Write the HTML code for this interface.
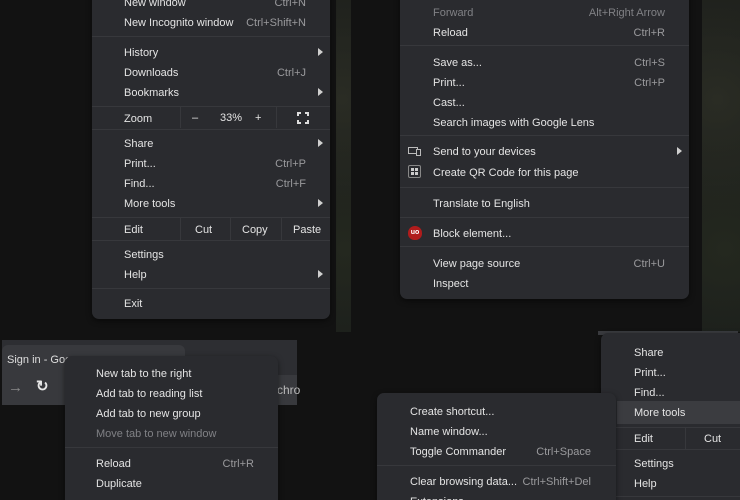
<!DOCTYPE html>
<html><head><meta charset="utf-8"><style>
*{margin:0;padding:0;box-sizing:border-box}
html{width:740px;height:500px;overflow:hidden;background:#121212}
body{width:740px;height:500px;background:#121212;position:relative;overflow:hidden;font-family:"Liberation Sans",sans-serif;font-size:11px;color:#e4e4e4}
.m{position:absolute;background:#2a2b2f;border-radius:7px;box-shadow:0 2px 6px rgba(0,0,0,.5)}
.t{position:absolute;white-space:nowrap;line-height:14px}
.r{position:absolute;white-space:nowrap;line-height:14px;color:#9a9a9d;text-align:right}
.d{color:#808185}
.s{position:absolute;height:1px;background:#37383c}
.v{position:absolute;width:1px;background:#37383c}
.a{position:absolute;width:0;height:0;border-top:4px solid transparent;border-bottom:4px solid transparent;border-left:5px solid #cfcfcf}
.star{position:absolute;background:radial-gradient(circle at 40% 30%,#2a2c24 0,transparent 50%),radial-gradient(circle at 60% 75%,#24281f 0,transparent 50%),linear-gradient(#1e201c,#1a1d1b);}
.c{position:absolute;width:4px;height:4px;border-color:#ddd;border-style:solid;border-width:0}
</style></head><body>

<div class="star" style="left:336px;top:0;width:15px;height:332px"></div>
<div class="star" style="left:702px;top:0;width:38px;height:332px"></div>
<div style="position:absolute;left:598px;top:331px;width:140px;height:4px;background:#3a3b3f"></div>

<!-- Menu 1 -->
<div class="m" style="left:92px;top:-20px;width:238px;height:339px"></div>
<div class="t" style="left:124px;top:-4px">New window</div><div class="r" style="left:230px;width:76px;top:-4px">Ctrl+N</div>
<div class="t" style="left:124px;top:16px">New Incognito window</div><div class="r" style="left:230px;width:76px;top:16px">Ctrl+Shift+N</div>
<div class="s" style="left:92px;width:238px;top:36px"></div>
<div class="t" style="left:124px;top:46px">History</div><div class="a" style="left:318px;top:48px"></div>
<div class="t" style="left:124px;top:66px">Downloads</div><div class="r" style="left:230px;width:76px;top:66px">Ctrl+J</div>
<div class="t" style="left:124px;top:86px">Bookmarks</div><div class="a" style="left:318px;top:88px"></div>
<div class="s" style="left:92px;width:238px;top:106px"></div>
<div class="t" style="left:124px;top:112px">Zoom</div>
<div class="v" style="left:180px;top:107px;height:21px"></div>
<div class="t" style="left:192px;top:111px">–</div>
<div class="t" style="left:220px;top:111px">33%</div>
<div class="t" style="left:255px;top:111px">+</div>
<div class="v" style="left:276px;top:107px;height:21px"></div>
<div class="c" style="left:297px;top:112px;border-top-width:2px;border-left-width:2px"></div>
<div class="c" style="left:305px;top:112px;border-top-width:2px;border-right-width:2px"></div>
<div class="c" style="left:297px;top:120px;border-bottom-width:2px;border-left-width:2px"></div>
<div class="c" style="left:305px;top:120px;border-bottom-width:2px;border-right-width:2px"></div>
<div class="s" style="left:92px;width:238px;top:129px"></div>
<div class="t" style="left:124px;top:137px">Share</div><div class="a" style="left:318px;top:139px"></div>
<div class="t" style="left:124px;top:157px">Print...</div><div class="r" style="left:230px;width:76px;top:157px">Ctrl+P</div>
<div class="t" style="left:124px;top:177px">Find...</div><div class="r" style="left:230px;width:76px;top:177px">Ctrl+F</div>
<div class="t" style="left:124px;top:197px">More tools</div><div class="a" style="left:318px;top:199px"></div>
<div class="s" style="left:92px;width:238px;top:217px"></div>
<div class="t" style="left:124px;top:223px">Edit</div>
<div class="v" style="left:180px;top:218px;height:22px"></div>
<div class="t" style="left:195px;top:223px">Cut</div>
<div class="v" style="left:230px;top:218px;height:22px"></div>
<div class="t" style="left:242px;top:223px">Copy</div>
<div class="v" style="left:281px;top:218px;height:22px"></div>
<div class="t" style="left:293px;top:223px">Paste</div>
<div class="s" style="left:92px;width:238px;top:240px"></div>
<div class="t" style="left:124px;top:248px">Settings</div>
<div class="t" style="left:124px;top:268px">Help</div><div class="a" style="left:318px;top:270px"></div>
<div class="s" style="left:92px;width:238px;top:288px"></div>
<div class="t" style="left:124px;top:297px">Exit</div>

<!-- Menu 2 -->
<div class="m" style="left:400px;top:-20px;width:289px;height:319px"></div>
<div class="t d" style="left:433px;top:6px">Forward</div><div class="r d" style="left:560px;width:105px;top:6px">Alt+Right Arrow</div>
<div class="t" style="left:433px;top:26px">Reload</div><div class="r" style="left:560px;width:105px;top:26px">Ctrl+R</div>
<div class="s" style="left:400px;width:289px;top:45px"></div>
<div class="t" style="left:433px;top:56px">Save as...</div><div class="r" style="left:560px;width:105px;top:56px">Ctrl+S</div>
<div class="t" style="left:433px;top:76px">Print...</div><div class="r" style="left:560px;width:105px;top:76px">Ctrl+P</div>
<div class="t" style="left:433px;top:96px">Cast...</div>
<div class="t" style="left:433px;top:116px">Search images with Google Lens</div>
<div class="s" style="left:400px;width:289px;top:135px"></div>
<div style="position:absolute;left:408px;top:147px;width:10px;height:7px;border:1px solid #bbb"></div><div style="position:absolute;left:416px;top:149px;width:5px;height:7px;border:1px solid #bbb;background:#2a2b2f"></div>
<div class="t" style="left:433px;top:145px">Send to your devices</div><div class="a" style="left:677px;top:147px"></div>
<div style="position:absolute;left:408px;top:165px;width:13px;height:13px;border:1px solid #888;border-radius:2px"></div>
<div style="position:absolute;left:411px;top:168px;width:3px;height:3px;background:#ccc;box-shadow:4px 0 #ccc,0 4px #ccc,4px 4px #ccc"></div>
<div class="t" style="left:433px;top:166px">Create QR Code for this page</div>
<div class="s" style="left:400px;width:289px;top:187px"></div>
<div class="t" style="left:433px;top:197px">Translate to English</div>
<div class="s" style="left:400px;width:289px;top:217px"></div>
<div style="position:absolute;left:408px;top:226px;width:14px;height:14px;border-radius:50% 50% 45% 45%;background:#b01c1c;color:#fff;font-size:7px;font-weight:bold;text-align:center;line-height:14px">uo</div>
<div class="t" style="left:433px;top:227px">Block element...</div>
<div class="s" style="left:400px;width:289px;top:246px"></div>
<div class="t" style="left:433px;top:257px">View page source</div><div class="r" style="left:560px;width:105px;top:257px">Ctrl+U</div>
<div class="t" style="left:433px;top:277px">Inspect</div>

<!-- Bottom-left browser -->
<div style="position:absolute;left:2px;top:340px;width:295px;height:65px;background:#2d2e32"></div>
<div style="position:absolute;left:2px;top:345px;width:183px;height:32px;background:#38393d;border-radius:6px 6px 0 0"></div>
<div style="position:absolute;left:2px;top:375px;width:295px;height:30px;background:#38393d"></div>
<div class="t" style="left:7px;top:353px;color:#dedede">Sign in - Goo</div>
<div class="t" style="left:8px;top:381px;color:#8a8a8a;font-size:15px">→</div>
<div class="t" style="left:36px;top:380px;color:#e8e8e8;font-size:15px;font-weight:bold">↻</div>
<div class="t" style="left:277px;top:383px;color:#bbb;font-size:12px">chro</div>
<div class="m" style="left:65px;top:356px;width:213px;height:160px"></div>
<div class="t" style="left:96px;top:367px">New tab to the right</div>
<div class="t" style="left:96px;top:387px">Add tab to reading list</div>
<div class="t" style="left:96px;top:407px">Add tab to new group</div>
<div class="t d" style="left:96px;top:427px">Move tab to new window</div>
<div class="s" style="left:65px;width:213px;top:447px"></div>
<div class="t" style="left:96px;top:457px">Reload</div><div class="r" style="left:200px;width:54px;top:457px">Ctrl+R</div>
<div class="t" style="left:96px;top:477px">Duplicate</div>

<!-- Bottom-right main menu -->
<div class="m" style="left:601px;top:333px;width:150px;height:180px"></div>
<div style="position:absolute;left:617px;top:401px;width:123px;height:23px;background:#3b3c40"></div>
<div class="t" style="left:634px;top:346px">Share</div>
<div class="t" style="left:634px;top:366px">Print...</div>
<div class="t" style="left:634px;top:386px">Find...</div>
<div class="t" style="left:634px;top:406px">More tools</div>
<div class="s" style="left:601px;width:139px;top:427px"></div>
<div class="t" style="left:634px;top:432px">Edit</div>
<div class="v" style="left:685px;top:428px;height:21px"></div>
<div class="t" style="left:704px;top:432px">Cut</div>
<div class="s" style="left:601px;width:139px;top:449px"></div>
<div class="t" style="left:634px;top:457px">Settings</div>
<div class="t" style="left:634px;top:477px">Help</div>
<div class="s" style="left:601px;width:139px;top:496px"></div>

<!-- Submenu -->
<div class="m" style="left:377px;top:393px;width:239px;height:120px"></div>
<div class="t" style="left:410px;top:405px">Create shortcut...</div>
<div class="t" style="left:410px;top:425px">Name window...</div>
<div class="t" style="left:410px;top:445px">Toggle Commander</div><div class="r" style="left:510px;width:81px;top:445px">Ctrl+Space</div>
<div class="s" style="left:377px;width:239px;top:465px"></div>
<div class="t" style="left:410px;top:475px">Clear browsing data...</div><div class="r" style="left:510px;width:81px;top:475px">Ctrl+Shift+Del</div>
<div class="t" style="left:410px;top:495px">Extensions</div>

</body></html>
